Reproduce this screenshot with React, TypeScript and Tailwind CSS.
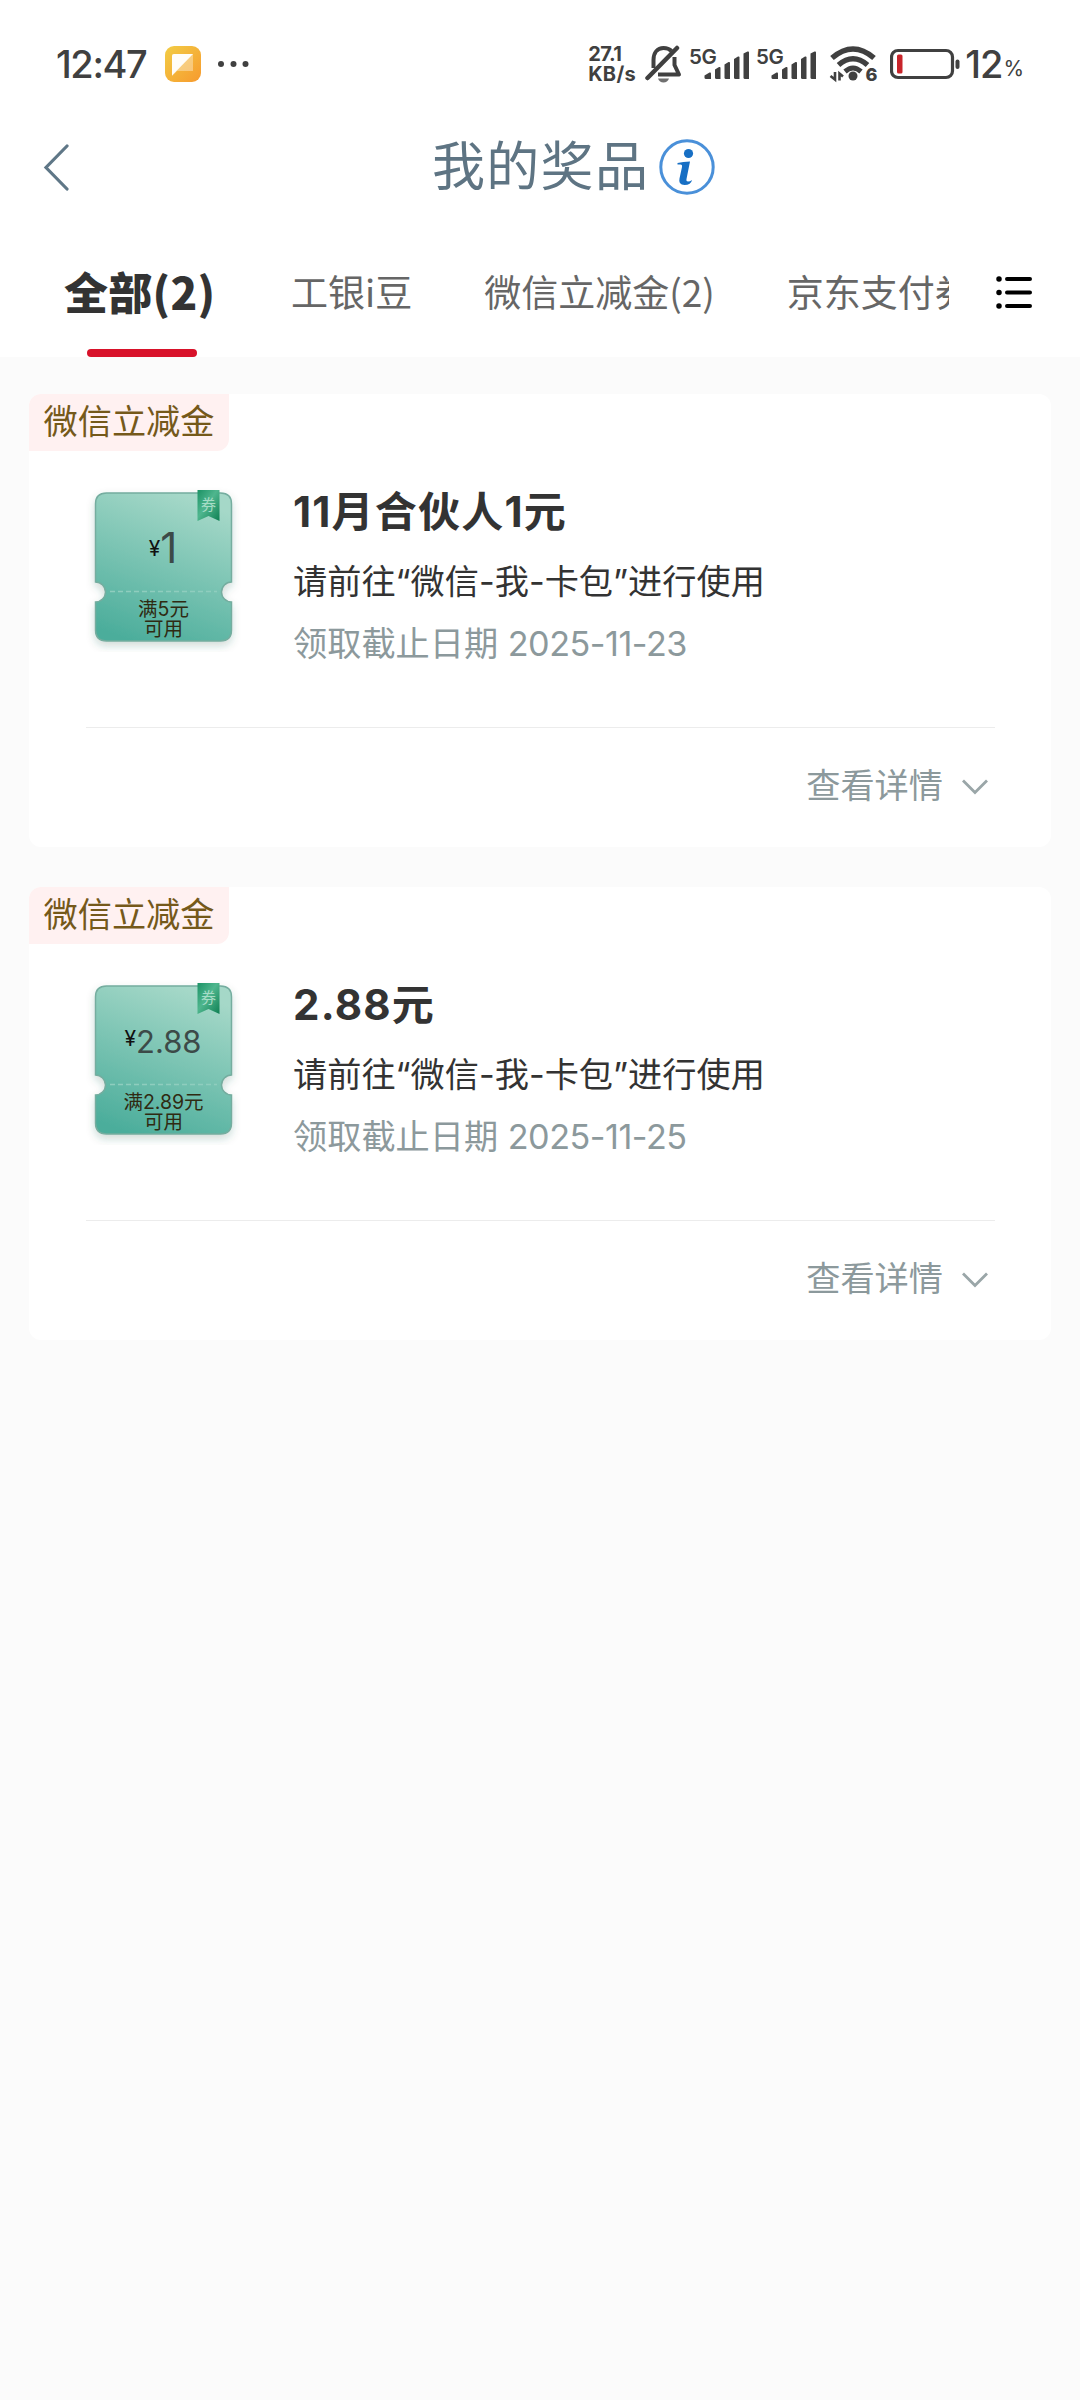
import { FC, memo } from "react";

interface Prize {
    id: number;
    category: string;
    title: string;
    usage: string;
    deadline: string;
    amount: string;
    amountSize: number;
    threshold: string;
}

const TABS = ["全部(2)", "工银i豆", "微信立减金(2)", "京东支付券"];

const PRIZES: Prize[] = [
    {
        id: 1,
        category: "微信立减金",
        title: "11月合伙人1元",
        usage: "请前往“微信-我-卡包”进行使用",
        deadline: "2025-11-23",
        amount: "1",
        amountSize: 42,
        threshold: "满5元",
    },
    {
        id: 2,
        category: "微信立减金",
        title: "2.88元",
        usage: "请前往“微信-我-卡包”进行使用",
        deadline: "2025-11-25",
        amount: "2.88",
        amountSize: 31,
        threshold: "满2.89元",
    },
];

const SignalIcon: FC = () => (
    <svg width="62" height="36" viewBox="0 0 62 36" className="overflow-visible" fill="#404040">
        <text x="0" y="17.500" fontSize="20.500" fontWeight="600" letterSpacing="-0.500">
            5G
        </text>
        <g transform="translate(15.500 5)">
            <path d="M0 24.500 L5 21.500 Q6.500 21 6.500 22.500 V28 H1.500 Q0 28 0 26.500Z" />
            <path d="M10.500 18.500 L14.500 16 Q16 15.500 16 17 V28 H12 Q10.500 28 10.500 26.500Z" />
            <path d="M20 13.500 L24 11 Q25.500 10.500 25.500 12 V28 H21.500 Q20 28 20 26.500Z" />
            <path d="M29.500 8 L33.500 5.500 Q35 5 35 6.500 V28 H31 Q29.500 28 29.500 26.500Z" />
            <path d="M39 2.500 L43 0.500 Q44.500 0 44.500 1.500 V28 H40.500 Q39 28 39 26.500Z" />
        </g>
    </svg>
);

const StatusBar: FC = () => (
    <div className="flex h-32 items-center justify-between pr-[57px] pl-[56px] text-[#404040]">
        <div className="flex items-center">
            <span className="w-[109px] text-[38px] leading-none font-medium tracking-[-1.4px]">12:47</span>
            <svg width="36" height="36" viewBox="0 0 36 36">
                <defs>
                    <linearGradient id="note" x1="0" y1="0" x2="1" y2="1">
                        <stop offset="0" stopColor="#f2cd45" />
                        <stop offset="1" stopColor="#f79a2e" />
                    </linearGradient>
                </defs>
                <rect width="36" height="36" rx="9" fill="url(#note)" />
                <path d="M9 8H28V25H12L7 30V10Q7 8 9 8Z" fill="#fff" opacity="0.35" />
                <path d="M9 8H28L7 29.500V10Q7 8 9 8Z" fill="#fff" opacity="0.95" />
            </svg>
            <svg width="34" height="8" viewBox="0 0 34 8" className="ml-4" fill="#404040">
                <circle cx="4" cy="4" r="3" />
                <circle cx="16.500" cy="4" r="3" />
                <circle cx="28.500" cy="4" r="3" />
            </svg>
        </div>
        <div className="flex items-center">
            <div className="w-[57px] text-[20px] leading-[20px] font-bold">
                <div className="tracking-[-0.5px]">27.1</div>
                <div className="tracking-[0.3px]">KB/s</div>
            </div>
            <svg width="38" height="40" viewBox="0 0 38 40" fill="none" stroke="#404040" className="mr-[6px]">
                <path d="M8.500 24 V16 C8.500 8.500 12.500 4 18.500 4 C22 4 24.500 5 26.500 7" strokeWidth="4" />
                <path d="M29.500 13 V21 L34 30.500 H13" strokeWidth="4" strokeLinejoin="round" />
                <path d="M2.500 34 L32 4" strokeWidth="4.500" strokeLinecap="round" />
                <path d="M13 34.500 H24 Q22.500 38.500 18.500 38.500 Q14.500 38.500 13 34.500Z" fill="#707070" stroke="none" />
            </svg>
            <SignalIcon />
            <div className="w-[5px]" />
            <SignalIcon />
            <svg
                width="50"
                height="36"
                viewBox="0 0 50 36"
                fill="none"
                stroke="#404040"
                className="ml-[11px] overflow-visible"
            >
                <path d="M3 12 Q24 -6 45 12" strokeWidth="5.500" />
                <path d="M9.500 19 Q24 6.500 38.500 19" strokeWidth="5.500" />
                <path d="M16 25.500 Q24 18.500 32 25.500" strokeWidth="5" />
                <circle cx="24" cy="30" r="4.500" fill="#404040" stroke="none" />
                <path d="M6 26 V33.500 L1.500 30 M10.500 34.500 V27.500 L14 30.500" strokeWidth="2.600" />
                <text x="36.500" y="35" fontSize="18" fontWeight="800" fill="#404040" stroke="none">
                    6
                </text>
            </svg>
            <svg width="71" height="32" viewBox="0 0 71 32" className="ml-[11px]">
                <rect x="1.500" y="2.500" width="61" height="27" rx="6.500" fill="none" stroke="#404040" strokeWidth="3.200" />
                <rect x="7" y="6.500" width="5.500" height="19" rx="1.500" fill="#c8242a" />
                <rect x="65.500" y="11.500" width="4" height="9.500" rx="2" fill="#404040" />
            </svg>
            <span className="ml-[4px] text-[38px] leading-none font-medium tracking-[-1px]">12</span>
            <span className="mt-[9px] ml-px text-[21px] leading-none tracking-[-1px]">%</span>
        </div>
    </div>
);

const TitleBar: FC = () => (
    <div className="flex h-[78px] items-center">
        <svg width="28" height="48" viewBox="0 0 28 48" className="ml-[42px]" fill="none" stroke="#5f7787" strokeWidth="3.200">
            <path d="M25 3 L4 24.500 L25 46" strokeLinecap="round" />
        </svg>
        <h1 className="ml-[362px] text-[53px] leading-none tracking-[1.3px] text-[#5e7483]">我的奖品</h1>
        <svg width="56" height="56" viewBox="0 0 56 56" className="ml-[10px]">
            <circle cx="28" cy="28" r="26.200" fill="none" stroke="#4a90d9" strokeWidth="3" />
            <circle cx="29.500" cy="14.500" r="4.600" fill="#176fc4" />
            <path
                d="M18.500 24 Q24 22.500 31 22.500 L27.500 40 Q27 42.500 29 42.500 Q31 42.500 33 41 Q32 46 25.500 46 Q19 46 20.500 39.500 L23 28 Q23.500 25.500 21.500 25.500 L18.500 25.500Z"
                fill="#176fc4"
            />
        </svg>
    </div>
);

const TabBar: FC = () => (
    <div className="flex h-[151px] items-stretch font-['Noto_Sans_CJK_SC',sans-serif]">
        <div className="flex w-[949px] gap-[72px] overflow-hidden pl-[64px] whitespace-nowrap">
            {TABS.map((tab, i) =>
                i === 0 ? (
                    <div key={tab} className="flex w-[155px] shrink-0 flex-col items-center">
                        <span className="mt-[59px] h-[52px] self-start text-[44px] leading-[52px] font-black tracking-[0.3px] text-[#333]">
                            {tab}
                        </span>
                        <span className="mt-[32px] h-2 w-[110px] rounded-full bg-[#d8122a]" />
                    </div>
                ) : (
                    <span key={tab} className="mt-[59px] h-[52px] shrink-0 text-[37px] leading-[52px] text-[#666]">
                        {tab}
                    </span>
                ),
            )}
        </div>
        <svg width="38" height="36" viewBox="0 0 38 36" className="mt-[68px] ml-[46px]" stroke="#000" strokeLinecap="round">
            <path d="M12 5H35M12 18.500H35M12 32H35" strokeWidth="4" />
            <path d="M4 5H4.010M4 18.500H4.010M4 32H4.010" strokeWidth="5.500" />
        </svg>
    </div>
);

const Coupon: FC<Pick<Prize, "id" | "amount" | "amountSize" | "threshold">> = ({ id, amount, amountSize, threshold }) => (
    <svg width="160" height="170" viewBox="0 0 160 170" className="shrink-0">
        <defs>
            <linearGradient id={`body-${id}`} x1="0.250" y1="1" x2="0.600" y2="0">
                <stop offset="0" stopColor="#4bad9b" />
                <stop offset="1" stopColor="#a5d8c8" />
            </linearGradient>
            <linearGradient id={`flag-${id}`} x1="0" y1="0" x2="1" y2="1">
                <stop offset="0" stopColor="#1b9265" />
                <stop offset="0.450" stopColor="#4fb68e" />
                <stop offset="1" stopColor="#0f8053" />
            </linearGradient>
            <filter id={`shadow-${id}`} x="-20%" y="-20%" width="140%" height="140%">
                <feDropShadow dx="0" dy="4" stdDeviation="4" floodColor="#2a5a50" floodOpacity="0.22" />
            </filter>
        </defs>
        <path
            d="M23.500 11H137.500Q148.500 11 148.500 22V100A10 10 0 0 0 148.500 120V148Q148.500 159 137.500 159H23.500Q12.500 159 12.500 148V120A10 10 0 0 0 12.500 100V22Q12.500 11 23.500 11Z"
            fill={`url(#body-${id})`}
            stroke="#74ad9f"
            strokeWidth="1.500"
            filter={`url(#shadow-${id})`}
        />
        <path d="M27 109.500H134" stroke="#8fcdbe" strokeWidth="1.500" strokeDasharray="5 3" />
        <path d="M114.500 8H136.500V39L125.500 34L114.500 39Z" fill={`url(#flag-${id})`} />
        <text x="125.500" y="28" textAnchor="middle" fontSize="15" fill="#a6dcc6">
            券
        </text>
        <text x="80" y={amountSize > 40 ? 81 : 78} textAnchor="middle" fontSize={amountSize} fill="#3c4a48">
            <tspan fontSize="21" fill="#111" dy="-7">
                ¥
            </tspan>
            <tspan dy="7">{amount}</tspan>
        </text>
        <text x="80.500" y="134" textAnchor="middle" fontSize="19.500" fill="#2f2a12">
            {threshold}
        </text>
        <text x="80.500" y="154" textAnchor="middle" fontSize="19.500" fill="#2f2a12">
            可用
        </text>
    </svg>
);

const PrizeCard: FC<Prize> = memo(({ id, category, title, usage, deadline, amount, amountSize, threshold }) => (
    <div className="flex h-[453px] flex-col overflow-hidden rounded-[12px] bg-white">
        <div className="flex h-[57px] w-[200px] items-center justify-center rounded-br-[12px] bg-[#fff1f1] text-[34.2px] leading-none text-[#75591a]">
            {category}
        </div>
        <div className="flex pt-[31px] pl-[54px]">
            <Coupon id={id} amount={amount} amountSize={amountSize} threshold={threshold} />
            <div className="ml-[50px] flex flex-col">
                <h2 className="h-[60px] text-[42px] leading-[59px] font-bold tracking-[1.2px] text-[#333]">{title}</h2>
                <p className="mt-[10px] h-[60px] text-[34.2px] leading-[60px] text-[#333]">{usage}</p>
                <p className="mt-[2px] h-[60px] text-[34.2px] leading-[60px] text-[#8c999c]">
                    领取截止日期 <span className="tracking-[-0.5px]">{deadline}</span>
                </p>
            </div>
        </div>
        <div className="mr-[56px] ml-[57px] mt-auto h-px shrink-0 bg-[#ececec]" />
        <div className="flex h-[119px] shrink-0 items-center justify-end pr-[62px] pb-[2px] text-[34.2px] leading-none text-[#8c999c]">
            查看详情
            <svg width="28" height="18" viewBox="0 0 28 18" className="ml-[18px]" fill="none" stroke="#9aa6a8" strokeWidth="2.800">
                <path d="M2 2.500 L14 14.500 L26 2.500" />
            </svg>
        </div>
    </div>
));

PrizeCard.displayName = "PrizeCard";

const App: FC = () => (
    <div className="min-h-[2400px] w-[1080px] bg-[#fbfbfb] font-['Inter','Noto_Sans_CJK_SC',sans-serif]">
        <header className="bg-white">
            <StatusBar />
            <TitleBar />
            <TabBar />
        </header>
        <main className="flex flex-col gap-10 px-[29px] pt-[37px]">
            {PRIZES.map((prize) => (
                <PrizeCard key={prize.id} {...prize} />
            ))}
        </main>
    </div>
);

export default App;
